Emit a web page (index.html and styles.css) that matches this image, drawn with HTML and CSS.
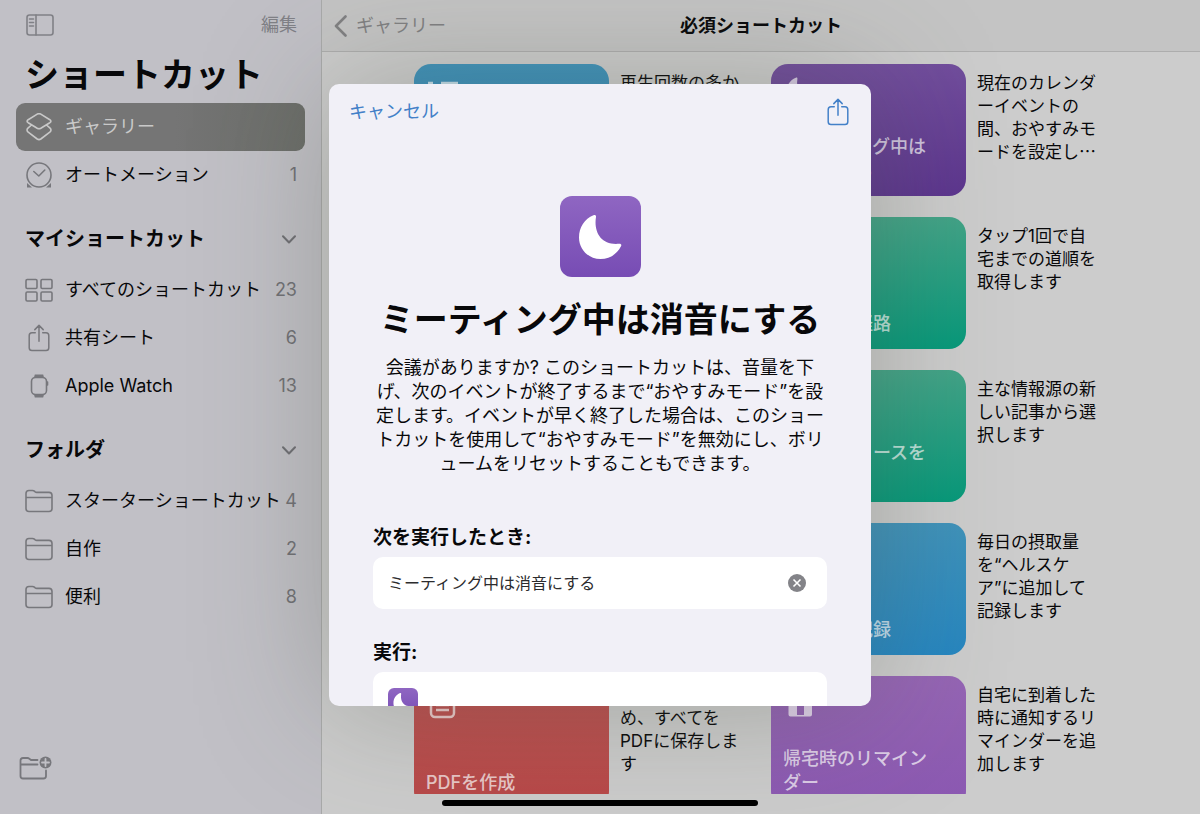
FILE: index.html
```
<!DOCTYPE html>
<html lang="ja">
<head>
<meta charset="utf-8">
<meta name="viewport" content="width=device-width, initial-scale=1">
<title>ショートカット</title>
<link rel="stylesheet" href="styles.css">
</head>
<body>
<svg class="defs" aria-hidden="true">
  <symbol id="folder" viewBox="0 0 28 24"><path d="M1 19.500V4.500Q1 1.500 4 1.500H7.500Q8.600 1.500 9.400 2.200L10.200 2.900Q10.800 3.400 11.800 3.400H24Q27 3.400 27 6.400V19.500Q27 22.500 24 22.500H4Q1 22.500 1 19.500ZM1 8.500H27"/></symbol>
  <symbol id="share" viewBox="0 0 24 30"><path d="M8 9.500H4.500Q1.500 9.500 1.500 12.500V25.500Q1.500 28.500 4.500 28.500H19.500Q22.500 28.500 22.500 25.500V12.500Q22.500 9.500 19.500 9.500H16M12 18.500V1.800M7.500 6L12 1.500L16.500 6"/></symbol>
  <symbol id="chevron" viewBox="0 0 14 9"><path d="M1 1.200L7 7.500L13 1.200"/></symbol>
  <symbol id="moon" viewBox="0 0 44 46"><path d="M15.500 1.200C17 .5 18.300 1.300 18 3C15.500 18 23 31.500 41 29.800C43 29.600 43.800 30.800 43 32.300C39 40.300 31.500 45 22.500 45C10.500 45 1 35.500 1 23.500C1 13.500 6.500 4.800 15.500 1.200Z"/></symbol>
</svg>

<div class="app">
  <aside class="sidebar">
    <div class="topbar">
      <button class="plain" aria-label="サイドバー">
        <svg class="icon i-panel" viewBox="0 0 28 22"><rect x="1" y="1" width="26" height="20" rx="2.500"/><path d="M10 1V21M3.500 5H7.500M3.500 8.500H7.500M3.500 12H7.500"/></svg>
      </button>
      <button class="plain">編集</button>
    </div>
    <h1 class="title">ショートカット</h1>
    <nav>
      <a class="item selected" href="#">
        <svg class="icon" viewBox="0 0 28 28"><path d="M12.200 1.100Q14 .1 15.800 1.100L24.800 6.700Q27 8.200 24.800 9.700L15.800 15.300Q14 16.300 12.200 15.300L3.200 9.700Q1 8.200 3.200 6.700ZM6.500 12L3.200 14.800Q.8 17 3.200 19.200L12.200 26Q14 27.200 15.800 26L24.800 19.200Q27.200 17 24.800 14.800L21.500 12"/></svg>
        <span>ギャラリー</span>
      </a>
      <a class="item" href="#">
        <svg class="icon" viewBox="0 0 28 28"><circle cx="14" cy="14" r="12"/><path d="M8.800 10.500L13.800 15L19.800 9"/><path class="fill" d="M2 22L7 26.500H2ZM26 22L21 26.500H26Z"/></svg>
        <span>オートメーション</span><span class="count">1</span>
      </a>
      <h2 class="section">マイショートカット<svg class="icon i-chevron"><use href="#chevron"/></svg></h2>
      <a class="item" href="#">
        <svg class="icon" viewBox="0 0 28 24"><rect x="1" y="1.500" width="11" height="9" rx="1.200"/><rect x="16" y="1.500" width="11" height="9" rx="1.200"/><rect x="1" y="14" width="11" height="9" rx="1.200"/><rect x="16" y="14" width="11" height="9" rx="1.200"/></svg>
        <span>すべてのショートカット</span><span class="count">23</span>
      </a>
      <a class="item" href="#">
        <svg class="icon"><use href="#share"/></svg>
        <span>共有シート</span><span class="count">6</span>
      </a>
      <a class="item" href="#">
        <svg class="icon" viewBox="0 0 28 28"><rect x="6.500" y="5.500" width="15" height="17" rx="4"/><path class="fill" d="M9 5.500L9.800 2.500H18.200L19 5.500ZM9 22.500L9.800 25.500H18.200L19 22.500Z"/><path d="M22.500 10V13"/></svg>
        <span>Apple Watch</span><span class="count">13</span>
      </a>
      <h2 class="section">フォルダ<svg class="icon i-chevron"><use href="#chevron"/></svg></h2>
      <a class="item" href="#">
        <svg class="icon"><use href="#folder"/></svg>
        <span>スターターショートカット</span><span class="count">4</span>
      </a>
      <a class="item" href="#">
        <svg class="icon"><use href="#folder"/></svg>
        <span>自作</span><span class="count">2</span>
      </a>
      <a class="item" href="#">
        <svg class="icon"><use href="#folder"/></svg>
        <span>便利</span><span class="count">8</span>
      </a>
    </nav>
    <button class="plain new-folder" aria-label="新規フォルダ">
      <svg class="icon i-new" viewBox="0 0 34 26"><path d="M18.500 5H12L10 3.500Q9.500 3 8.500 3H4Q1.500 3 1.500 5.500V21Q1.500 23.500 4 23.500H24.500Q27 23.500 27 21V15.500M1.500 9.500H18.500"/><circle class="fill" cx="26.500" cy="7.500" r="6"/><path class="cut" d="M26.500 4V11M23 7.500H30"/></svg>
    </button>
  </aside>

  <main class="main">
    <header class="navbar">
      <button class="plain back"><svg class="icon i-back" viewBox="0 0 13 22"><path d="M11.500 1.500L2 11L11.500 20.500"/></svg>ギャラリー</button>
      <h2 class="nav-title">必須ショートカット</h2>
    </header>
    <div class="gallery">
      <article class="entry first left">
        <div class="card blue"><svg class="glyph" viewBox="0 0 30 24"><path d="M0 3H5M13 3H30M0 11H5M13 11H30M0 19H5M13 19H30"/></svg></div>
        <p class="desc">再生回数の多か</p>
      </article>
      <article class="entry">
        <div class="card violet"><svg class="glyph solid"><use href="#moon"/></svg><h3>ミーティング中は<br>消音にする</h3></div>
        <p class="desc">現在のカレンダ<br>ーイベントの<br>間、おやすみモ<br>ードを設定し<span class="cjk">…</span></p>
      </article>
      <article class="entry">
        <div class="card green"><h3>自宅への経路</h3></div>
        <p class="desc">タップ1回で自<br>宅までの道順を<br>取得します</p>
      </article>
      <article class="entry">
        <div class="card green"><h3>主要なニュースを<br>読む</h3></div>
        <p class="desc">主な情報源の新<br>しい記事から選<br>択します</p>
      </article>
      <article class="entry">
        <div class="card blue"><h3>摂取量を記録</h3></div>
        <p class="desc">毎日の摂取量<br>を“ヘルスケ<br>ア”に追加して<br>記録します</p>
      </article>
      <article class="entry last left">
        <div class="card red"><svg class="glyph" viewBox="0 0 30 30"><rect x="3" y="2" width="23" height="26" rx="4"/><path d="M8 10H21M8 16H21M8 21H21"/></svg><h3>PDFを作成</h3></div>
        <p class="desc">複数の項目を集<br>め、すべてを<br>PDFに保存しま<br>す</p>
      </article>
      <article class="entry last">
        <div class="card orchid"><svg class="glyph solid" viewBox="0 0 30 30"><path fill-rule="evenodd" d="M15 1L29 12H27V25.500Q27 27.500 25 27.500H5.500Q3.500 27.500 3.500 25.500V12H1ZM12 14H19V26H12Z"/></svg><h3>帰宅時のリマイン<br>ダー</h3></div>
        <p class="desc">自宅に到着した<br>時に通知するリ<br>マインダーを追<br>加します</p>
      </article>
    </div>
  </main>
</div>

<div class="overlay">
  <section class="sheet" role="dialog" aria-labelledby="sheet-title">
    <header class="sheet-bar">
      <button class="plain">キャンセル</button>
      <button class="plain" aria-label="共有"><svg class="icon i-share"><use href="#share"/></svg></button>
    </header>
    <div class="sheet-body">
      <div class="app-icon"><svg><use href="#moon"/></svg></div>
      <h2 class="sheet-title" id="sheet-title">ミーティング中は消音にする</h2>
      <p class="lead">会議がありますか? このショートカットは、音量を下<br>げ、次のイベントが終了するまで“おやすみモード”を設<br>定します。イベントが早く終了した場合は、このショー<br>トカットを使用して“おやすみモード”を無効にし、ボリ<br>ュームをリセットすることもできます。</p>
      <label class="field-label" for="phrase">次を実行したとき:</label>
      <div class="field">
        <input id="phrase" type="text" value="ミーティング中は消音にする">
        <button class="plain" aria-label="消去"><svg class="i-clear" viewBox="0 0 18 18"><circle cx="9" cy="9" r="9"/><path d="M5.500 5.500L12.500 12.500M12.500 5.500L5.500 12.500"/></svg></button>
      </div>
      <h3 class="field-label">実行:</h3>
      <div class="field action"><div class="app-icon small"><svg><use href="#moon"/></svg></div></div>
    </div>
  </section>
</div>
<div class="home-indicator"></div>
</body>
</html>
```
FILE: styles.css
```
* { box-sizing: border-box; }

body {
  margin: 0;
  height: 100vh;
  overflow: hidden;
  font: 18px/24px Inter, "Noto Sans CJK JP", sans-serif;
  color: #08080a;
  background: #ccc;
}

h1, h2, h3, p { margin: 0; }
a { color: inherit; text-decoration: none; }
svg { display: block; }
.defs { position: absolute; width: 0; height: 0; }

.plain {
  padding: 0;
  border: 0;
  background: none;
  font: inherit;
  color: inherit;
}

.icon {
  flex: none;
  width: 28px;
  height: 28px;
  fill: none;
  stroke: currentColor;
  stroke-width: 1.6;
  stroke-linecap: round;
  stroke-linejoin: round;
}
.icon .fill { fill: currentColor; stroke: none; }
.icon .cut { stroke: #c1c0c6; }

.app { display: flex; height: 100%; }

/* Sidebar */
.sidebar {
  display: flex;
  flex-direction: column;
  flex: none;
  width: 322px;
  padding: 0 16px;
  border-right: 1px solid #a9aaaa;
  background: #c1c0c6;
}
.topbar {
  display: flex;
  align-items: center;
  justify-content: space-between;
  height: 50px;
  padding: 0 8px 0 10px;
  color: #808086;
}
.i-panel { height: 22px; }
.title {
  margin-bottom: 3px;
  padding-left: 9px;
  font-size: 34px;
  line-height: 50px;
}
.item {
  display: flex;
  align-items: center;
  height: 48px;
  padding: 0 8px 0 9px;
  border-radius: 9px;
  white-space: nowrap;
}
.item .icon { margin-right: 12px; color: #77777c; }
.item .count { margin-left: auto; color: #707075; }
.item.selected,
.item.selected .icon { color: #c9c9c9; }
.item.selected { background: linear-gradient(90deg, #757575 55%, #6b6d69); }
.section {
  display: flex;
  align-items: center;
  justify-content: space-between;
  height: 54px;
  margin-top: 13px;
  padding: 0 9px;
  font-size: 20px;
}
.i-chevron { width: 14px; height: 9px; color: #6f6f74; stroke-width: 2; }
.new-folder { margin: auto auto 33px 3px; color: #77777c; }
.i-new { width: 34px; height: 26px; stroke-width: 1.8; }

/* Gallery */
.main {
  display: flex;
  flex-direction: column;
  flex: 1;
  min-width: 0;
  padding-bottom: 20px;
}
.navbar {
  display: grid;
  grid-template-columns: 1fr auto 1fr;
  align-items: center;
  height: 52px;
  padding: 0 12px;
  border-bottom: 1px solid #adadad;
  background: #c4c4c4;
}
.back {
  display: flex;
  align-items: center;
  gap: 9px;
  color: #808082;
}
.i-back { width: 13px; height: 22px; stroke-width: 2.6; }
.nav-title { font-size: 18px; }
.gallery {
  display: grid;
  grid-template-columns: 1fr 1fr;
  grid-auto-rows: 132px;
  gap: 21px 20px;
  flex: 1;
  min-height: 0;
  padding: 12px 92px 0;
  overflow: hidden;
}
.entry { display: flex; gap: 11px; grid-column: 2; }
.entry.left { grid-column: 1; }
.entry.first { grid-row: 1; }
.entry.last { grid-row: 5; }
.card {
  display: flex;
  flex-direction: column;
  justify-content: space-between;
  flex: none;
  width: 195px;
  padding: 13px 12px;
  border-radius: 17px;
  color: rgba(255, 255, 255, .7);
}
.card h3 { margin-top: auto; font-size: 18px; font-weight: 500; }
.blue { background: linear-gradient(#3f92ba, #2686c0); }
.violet { background: linear-gradient(#714d9c, #5c358e); }
.green { background: linear-gradient(#42a387, #06997a); }
.red { background: linear-gradient(#bd5151, #b84848); }
.orchid { background: linear-gradient(#9565b4, #8b58b2); }
.glyph {
  width: 30px;
  height: 30px;
  margin-left: 2px;
  fill: none;
  stroke: currentColor;
  stroke-width: 2.5;
}
.glyph.solid { fill: currentColor; stroke: none; }
.desc {
  padding-top: 8px;
  font-size: 17px;
  line-height: 23px;
  white-space: nowrap;
}
.cjk { font-family: "Noto Sans CJK JP", sans-serif; line-height: 1; }

/* Sheet */
.overlay {
  position: absolute;
  inset: 0;
  display: flex;
  align-items: center;
  justify-content: center;
  padding: 84px 20px 108px;
}
.sheet {
  width: 542px;
  height: 100%;
  overflow: hidden;
  border-radius: 10px;
  background: #f1f0f7;
  box-shadow: 0 0 130px rgba(80, 85, 70, .34);
}
.sheet-bar {
  display: flex;
  align-items: center;
  justify-content: space-between;
  height: 55px;
  padding: 0 20px;
  color: #4380c8;
}
.i-share { width: 26px; height: 28px; }
.sheet-body {
  display: flex;
  flex-direction: column;
  padding: 57px 44px 0;
}
.app-icon {
  display: grid;
  place-items: center;
  align-self: center;
  width: 81px;
  height: 81px;
  border-radius: 12px;
  background: linear-gradient(#8f66c2, #774cb4);
}
.app-icon svg { width: 44px; height: 46px; fill: #fff; }
.app-icon.small { align-self: auto; width: 30px; height: 30px; border-radius: 6px; }
.app-icon.small svg { width: 20px; height: 22px; }
.sheet-title {
  margin: 18px 0 11px;
  font-size: 34px;
  line-height: 50px;
  text-align: center;
  white-space: nowrap;
}
.lead { text-align: center; white-space: nowrap; }
.field-label {
  margin: 50px 0 7px;
  font-size: 19px;
  font-weight: 700;
}
.field {
  display: flex;
  align-items: center;
  height: 52px;
  padding: 0 21px 0 15px;
  border-radius: 10px;
  background: #fff;
}
.field + .field-label { margin-top: 32px; }
.field input {
  flex: 1;
  min-width: 0;
  padding: 0;
  border: 0;
  outline: 0;
  background: none;
  font: inherit;
  font-size: 16px;
  color: #2c2c2e;
}
.i-clear { width: 18px; height: 18px; fill: #838388; stroke: #fff; stroke-width: 1.6; }
.i-clear circle { stroke: none; }
.action { align-items: flex-start; height: 80px; padding-top: 16px; }

.home-indicator {
  position: absolute;
  bottom: 8px;
  left: 50%;
  width: 316px;
  height: 6px;
  margin-left: -158px;
  border-radius: 3px;
  background: #000;
}
```
